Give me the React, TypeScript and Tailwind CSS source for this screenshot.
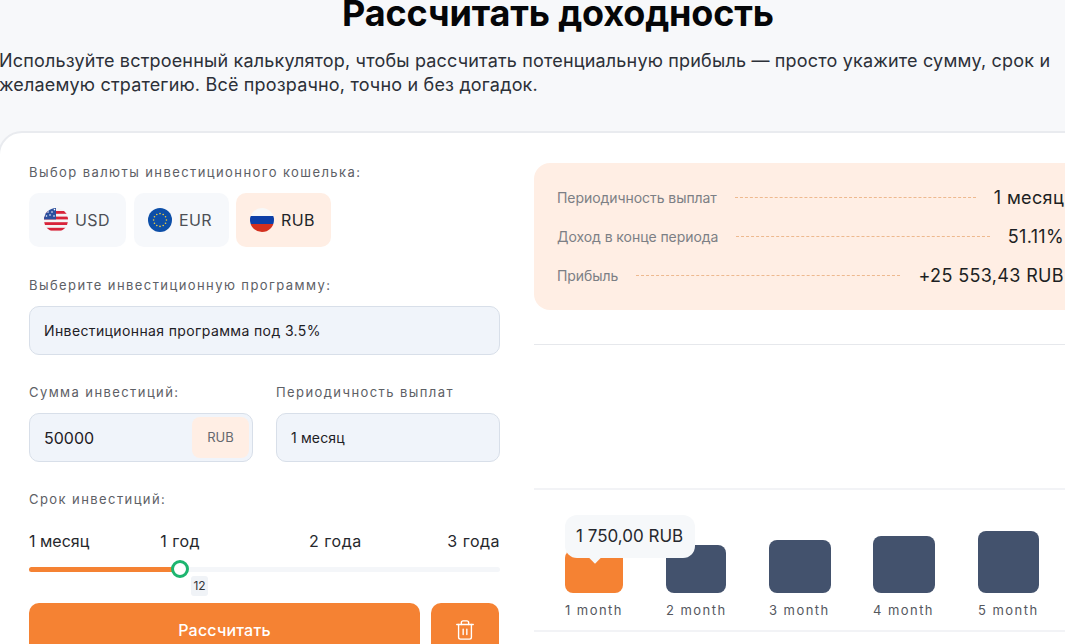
import { Trash2 } from "lucide-react";

function UsFlag() {
  return (
    <svg width="24" height="24" viewBox="0 0 24 24" className="shrink-0">
      <defs>
        <clipPath id="us"><circle cx="12" cy="12" r="12" /></clipPath>
      </defs>
      <g clipPath="url(#us)">
        <rect width="24" height="24" fill="#f4f4f4" />
        <rect y="3" width="24" height="2.8" fill="#d8233a" />
        <rect y="8.6" width="24" height="2.8" fill="#d8233a" />
        <rect y="14.2" width="24" height="2.8" fill="#d8233a" />
        <rect y="19.8" width="24" height="2.8" fill="#d8233a" />
        <rect width="12" height="11.4" fill="#2b4f9e" />
        <g fill="#fff">
          <circle cx="4" cy="4" r="0.8" />
          <circle cx="8" cy="4" r="0.8" />
          <circle cx="10.5" cy="1.6" r="0.8" />
          <circle cx="6" cy="7" r="0.8" />
          <circle cx="2.5" cy="8" r="0.8" />
          <circle cx="10" cy="8" r="0.8" />
        </g>
      </g>
    </svg>
  );
}

function EuFlag() {
  const stars = Array.from({ length: 12 }, (_, i) => {
    const a = (i * Math.PI) / 6;
    return { x: 12 + 6.4 * Math.cos(a), y: 12 + 6.4 * Math.sin(a) };
  });
  return (
    <svg width="24" height="24" viewBox="0 0 24 24" className="shrink-0">
      <circle cx="12" cy="12" r="12" fill="#0d4fa8" />
      {stars.map((s, i) => (
        <circle key={i} cx={s.x} cy={s.y} r="0.8" fill="#f3cf3c" />
      ))}
    </svg>
  );
}

function RuFlag() {
  return (
    <svg width="24" height="24" viewBox="0 0 24 24" className="shrink-0">
      <defs>
        <clipPath id="ru"><circle cx="12" cy="12" r="12" /></clipPath>
      </defs>
      <g clipPath="url(#ru)">
        <rect width="24" height="8" fill="#f8f8f8" />
        <rect y="8" width="24" height="8" fill="#0c3fa8" />
        <rect y="16" width="24" height="8" fill="#d3301f" />
      </g>
    </svg>
  );
}

const labelCls = "text-[13px] leading-[16px] tracking-[1.42px] text-[#5d6066]";

function Row({ label, value }: { label: string; value: string }) {
  return (
    <div className="flex items-center gap-[18px] h-[24px]">
      <span className="text-[14px] tracking-[-0.06px] text-[#7c7f85] whitespace-nowrap">{label}</span>
      <span className="flex-1 border-t border-dashed border-[#eeb98f]" />
      <span className="text-[18px] tracking-[0.35px] text-[#1d1f23] whitespace-nowrap">{value}</span>
    </div>
  );
}

function Bar({ h, label, w, bg, ml }: { h: string; label: string; w: string; bg: string; ml: string }) {
  return (
    <div className={`flex flex-col justify-end ${w} ${ml}`}>
      <div className={`${h} ${bg} rounded-[8px]`} />
      <div className="mt-[8px] text-[13px] leading-[18px] tracking-[1.45px] text-[#55585e] whitespace-nowrap">{label}</div>
    </div>
  );
}

export default function App() {
  return (
    <div className="h-screen overflow-hidden bg-[#f7f8fa] font-['Inter','Liberation_Sans',sans-serif]">
      <h1 className="-mt-[9px] text-center text-[36px] leading-[44px] font-bold tracking-[-0.15px] text-[#050608] ml-[51px] whitespace-nowrap">
        Рассчитать доходность
      </h1>
      <p className="mt-[14px] w-[1065px] text-[18px] leading-[24px] tracking-[0.18px] text-[#2c3038] -ml-px">
        Используйте встроенный калькулятор, чтобы рассчитать потенциальную прибыль — просто укажите сумму, срок и
        <br />
        желаемую стратегию. Всё прозрачно, точно и без догадок.
      </p>

      <div className="mt-[34px] -ml-[2px] w-[1140px] h-[560px] bg-white border-2 border-[#e9ebef] rounded-[24px] flex pl-[29px] pt-[31px]">
        <div className="w-[471px] shrink-0">
          <div className={labelCls}>Выбор валюты инвестиционного кошелька:</div>
          <div className="mt-[13px] flex">
            <div className="h-[54px] w-[97px] rounded-[10px] bg-[#f6f8fb] flex items-center pl-[15px] gap-[7px] text-[16px] tracking-[0.4px] text-[#4d5056]">
              <UsFlag />USD
            </div>
            <div className="ml-[8px] h-[54px] w-[95px] rounded-[10px] bg-[#f6f8fb] flex items-center pl-[14px] gap-[7px] text-[16px] tracking-[0.4px] text-[#4d5056]">
              <EuFlag />EUR
            </div>
            <div className="ml-[7px] h-[54px] w-[95px] rounded-[10px] bg-[#ffeee4] flex items-center pl-[14px] gap-[7px] text-[16px] tracking-[0.4px] text-[#222429]">
              <RuFlag />RUB
            </div>
          </div>

          <div className={`${labelCls} mt-[30px]`}>Выберите инвестиционную программу:</div>
          <div className="mt-[13px] h-[49px] px-[14px] flex items-center rounded-[10px] bg-[#f0f4fa] border border-[#d8dfe9] text-[14px] tracking-[0.38px] text-[#1e2025]">
            Инвестиционная программа под 3.5%
          </div>

          <div className="mt-[29px] flex gap-[23px]">
            <div className="flex-1">
              <div className={labelCls}>Сумма инвестиций:</div>
              <div className="mt-[13px] h-[49px] pl-[14px] pr-[3px] flex items-center justify-between rounded-[10px] bg-[#f0f4fa] border border-[#d8dfe9] text-[16px] text-[#1e2025]">
                50000
                <span className="w-[57px] h-[41px] rounded-[8px] bg-[#ffeee4] flex items-center justify-center text-[13px] text-[#65686e]">RUB</span>
              </div>
            </div>
            <div className="flex-1">
              <div className={labelCls}>Периодичность выплат</div>
              <div className="mt-[13px] h-[49px] px-[14px] flex items-center rounded-[10px] bg-[#f0f4fa] border border-[#d8dfe9] text-[14px] tracking-[0.15px] text-[#1e2025]">
                1 месяц
              </div>
            </div>
          </div>

          <div className={`${labelCls} mt-[29px]`}>Срок инвестиций:</div>
          <div className="mt-[22px] flex text-[16px] leading-[24px] tracking-[0.5px] text-[#26282d]">
            <span className="tracking-[0px]">1 месяц</span>
            <span className="ml-[71px]">1 год</span>
            <span className="ml-[109px]">2 года</span>
            <span className="ml-auto">3 года</span>
          </div>
          <div className="relative mt-[14px] h-[5px] rounded-full bg-[#f4f6f9]">
            <div className="h-full w-[151px] rounded-full bg-[#f58233]" />
            <div className="absolute left-[142px] -top-[7px] size-[18px] rounded-full bg-white border-[3px] border-[#1db56f]" />
            <div className="absolute left-[162px] top-[9px] h-[20px] w-[17px] rounded-[3px] bg-[#f0f3f7] flex items-center justify-center text-[12px] text-[#33363b]">12</div>
          </div>

          <div className="mt-[31px] w-[470px] flex gap-[11px]">
            <div className="h-[54px] flex-1 rounded-[10px] bg-[#f58233] flex items-center justify-center text-[16px] tracking-[0.2px] font-medium text-white">
              Рассчитать
            </div>
            <div className="h-[54px] w-[68px] rounded-[10px] bg-[#f58233] flex items-center justify-center text-white">
              <Trash2 size={22} strokeWidth={1.5} />
            </div>
          </div>
        </div>

        <div className="ml-[34px] -mt-px w-[607px] shrink-0">
          <div className="pr-[77px] pl-[23px] pt-[22px] bg-[#ffeee4] rounded-[16px] h-[147px] w-[607px] flex flex-col gap-[15px]">
            <Row label="Периодичность выплат" value="1 месяц" />
            <Row label="Доход в конце периода" value="51.11%" />
            <Row label="Прибыль" value="+25 553,43 RUB" />
          </div>
          <div className="mt-[34px] h-[144px] border-t border-[#e6e8ec]" />
          <div className="relative h-[144px] border-y-2 border-[#f2f3f6] flex items-end pl-[31px] pb-[11px]">
            <Bar h="h-[43px]" label="1 month" w="w-[58px]" bg="bg-[#f58233]" ml="" />
            <Bar h="h-[48px]" label="2 month" w="w-[60px]" bg="bg-[#43526d]" ml="ml-[43px]" />
            <Bar h="h-[53px]" label="3 month" w="w-[62px]" bg="bg-[#43526d]" ml="ml-[43px]" />
            <Bar h="h-[57px]" label="4 month" w="w-[62px]" bg="bg-[#43526d]" ml="ml-[42px]" />
            <Bar h="h-[62px]" label="5 month" w="w-[61px]" bg="bg-[#43526d]" ml="ml-[43px]" />
            <div className="absolute left-[31px] top-[25px] h-[43px] w-[130px] rounded-[12px] bg-[#f6f8fa] pl-[11px] flex items-center text-[17px] text-[#26282d] whitespace-nowrap">
              1 750,00 RUB
              <span className="absolute left-[26px] -bottom-[4px] size-[8px] rotate-45 bg-[#f6f8fa]" />
            </div>
          </div>
        </div>
      </div>
    </div>
  );
}
